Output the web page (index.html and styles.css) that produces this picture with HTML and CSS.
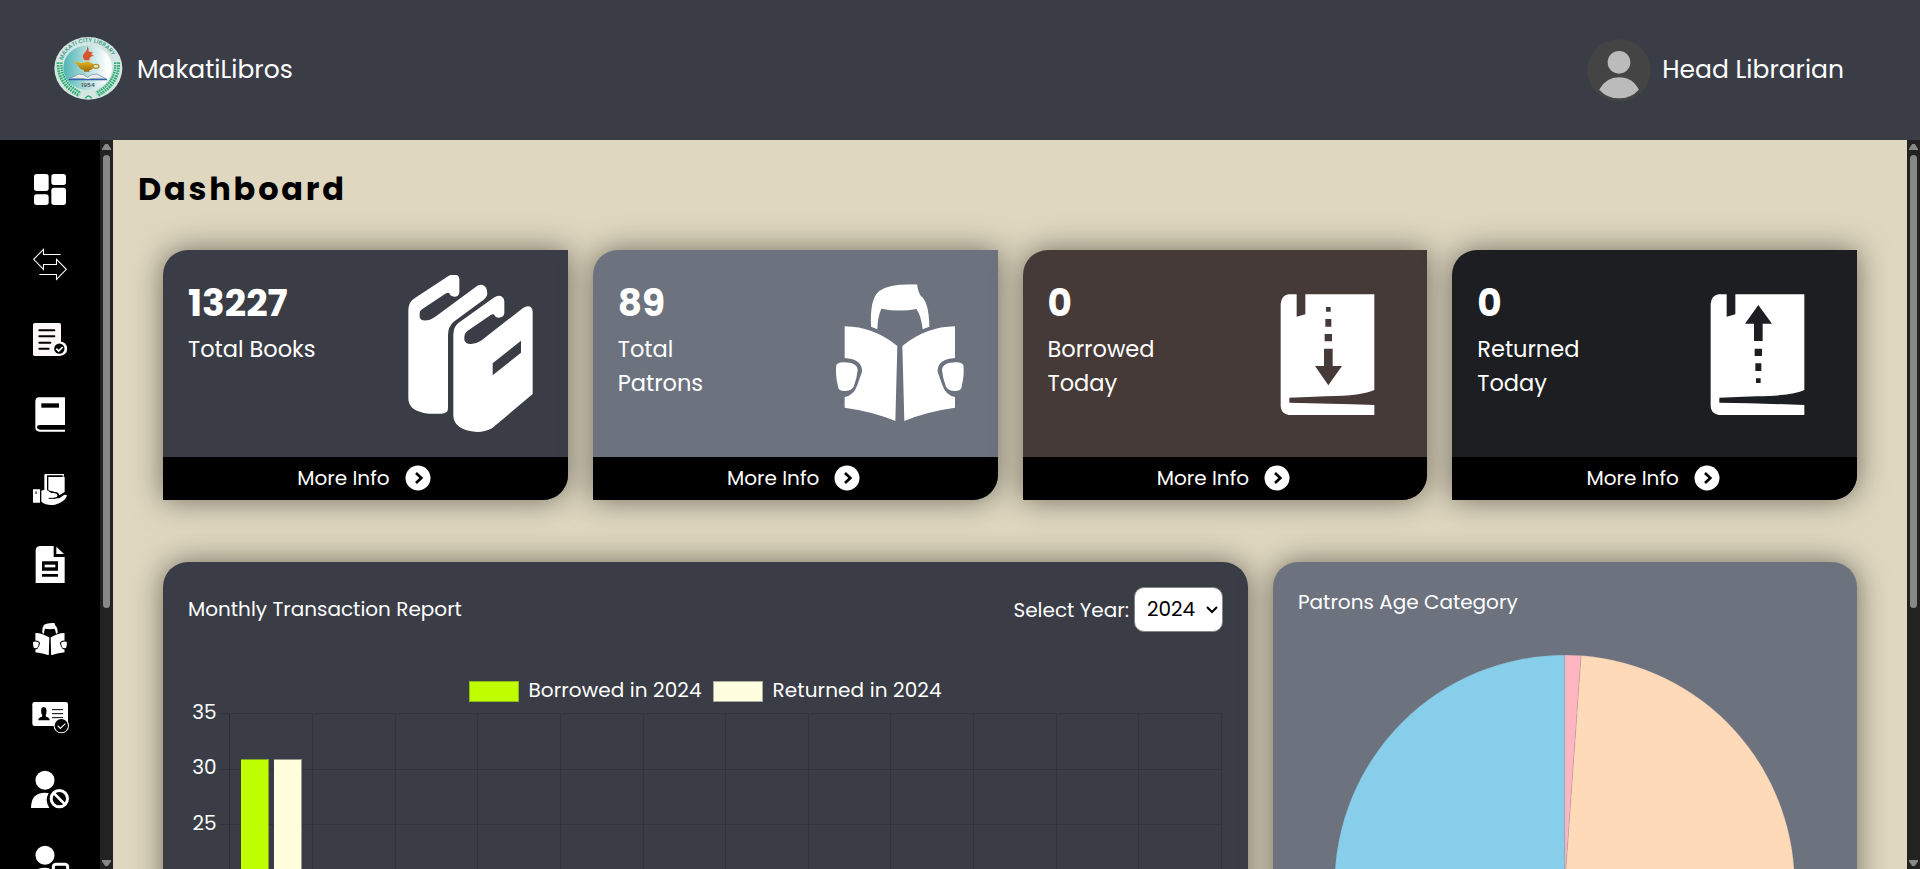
FILE: index.html
```html
<!DOCTYPE html>
<html lang="en">
<head>
<meta charset="utf-8">
<title>MakatiLibros</title>
<link rel="stylesheet" href="styles.css">
</head>
<body>
<svg class="defs" aria-hidden="true">
  <symbol id="reader" viewBox="766 163 386 410" preserveAspectRatio="none">
    <path d="M872 290Q868 205 897 183Q925 163 985 163H1010Q1013 185 1021 197Q1046 215 1047 290L1027 298Q1022 255 1008 237Q957 247 903 236Q892 260 891 298Z"/>
    <g id="reader-half">
      <path d="M793 289Q880 290 951 348L945 573Q880 545 793 533V501Q820 497 831 465L845 425Q847 388 793 384Z"/>
      <path d="M768 405Q775 396 790 397Q830 397 832 420Q830 445 820 470Q812 483 793 483Q775 483 773 470Q764 430 768 405Z"/>
    </g>
    <use href="#reader-half" transform="translate(1917 0) scale(-1 1)"/>
  </symbol>
  <symbol id="more" viewBox="762 702 84 84">
    <circle cx="804" cy="744" r="37.500" fill="#fff"/>
    <path d="M798 729L814 744L798 759" fill="none" stroke="#000" stroke-width="8"/>
  </symbol>
</svg>

<header class="topbar">
  <div class="brand">
    <svg class="logo" viewBox="162 108 207 195">
      <defs>
        <linearGradient id="sky"><stop offset="0" stop-color="#4fb5b4"/><stop offset=".5" stop-color="#b5dede"/><stop offset=".9" stop-color="#fff"/></linearGradient>
        <linearGradient id="gold" x2="0" y2="1"><stop offset="0" stop-color="#e8b81c"/><stop offset="1" stop-color="#9a6a10"/></linearGradient>
        <path id="arc" d="M187 184A80 74 0 0 1 343 184"/>
      </defs>
      <ellipse cx="265" cy="205" rx="102" ry="94" fill="#d3e6e2"/>
      <ellipse cx="263" cy="203" rx="73" ry="67" fill="url(#sky)"/>
      <path d="M179 187Q176 250 240 283M351 187Q354 250 290 283" fill="none" stroke="#2fae74" stroke-width="18" stroke-dasharray="5 2.500"/>
      <path d="M179 187Q176 250 240 283M351 187Q354 250 290 283" fill="none" stroke="#d3e6e2" stroke-width="2"/>
      <path d="M256 295Q265 281 275 295" fill="none" stroke="#2fae74" stroke-width="5"/>
      <path d="M254 181Q242 168 256 156Q262 150 262 138Q268 147 265 154L280 158L273 162L282 168Q268 168 268 181Z" fill="#d8552c"/>
      <path d="M218 183L236 187Q245 192 262 184Q278 190 282 196Q280 209 268 211V215H252V211Q240 208 234 197Q228 186 218 183Z" fill="url(#gold)"/>
      <ellipse cx="288" cy="199" rx="9" ry="6" fill="none" stroke="#c08a1a" stroke-width="3.500"/>
      <path d="M207 237L236 222Q254 222 263 232Q272 222 290 222L320 237Q280 232 263 239Q246 232 207 237Z" fill="#e9eef0" stroke="#68808c" stroke-width="2"/>
      <path d="M206 239H321" stroke="#355db4" stroke-width="3.500"/>
      <text class="logo-year" x="264" y="262" text-anchor="middle">1954</text>
      <text class="logo-ring"><textPath href="#arc" startOffset="3" textLength="188">MAKATI CITY LIBRARY</textPath></text>
    </svg>
    <span class="topbar-text">MakatiLibros</span>
  </div>
  <div class="account">
    <svg class="avatar" viewBox="199.500 116 192 189">
      <ellipse cx="295.500" cy="210" rx="95" ry="93" fill="#444"/>
      <circle cx="295.500" cy="186" r="34" fill="#bbb"/>
      <path d="M236 268Q256 231 295 231Q336 231 355 268Q332 294 295 294Q260 294 236 268Z" fill="#bbb"/>
    </svg>
    <span class="topbar-text">Head Librarian</span>
  </div>
</header>

<div class="shell">
  <nav class="sidebar">
    <svg class="nav-icon" viewBox="75 72 150 153"><rect x="102" y="102" width="44" height="51" rx="8"/><rect x="154" y="102" width="44" height="33" rx="8"/><rect x="102" y="163" width="44" height="32" rx="8"/><rect x="154" y="143" width="44" height="52" rx="8"/></svg>
    <svg class="nav-icon" viewBox="75 297 150 153"><path d="M182 343.500H130.500V328L101 358L130.500 388V373.500H169.500V358L199 388L169.500 418V403.500H118" fill="none" stroke="#fff" stroke-width="3.200"/></svg>
    <svg class="nav-icon" viewBox="75 522 150 153"><rect x="99" y="549" width="84" height="99" rx="5" fill="#fff8f8"/><path d="M118 571H163M118 589H163M118 608H151M118 626H146" stroke="#000" stroke-width="6" stroke-linecap="round"/><circle cx="180" cy="626" r="21.500"/><circle cx="178" cy="626" r="15.500" fill="#000"/><path d="M169 626L176 633L188 621" fill="none" stroke="#fff" stroke-width="5"/></svg>
    <svg class="nav-icon" viewBox="75 747 150 153"><path d="M195 772H117Q106 772 106 785V862Q106 875 119 875H195V869H120Q111 868 111 862Q111 855 120 855H195Z"/><path d="M124 790H177V803H124Z" fill="#000"/></svg>
    <svg class="nav-icon" viewBox="75 972 150 153"><path d="M99 1048H120V1088H99ZM134 1002H192V1006H134ZM133 1004H141V1052H133ZM188 1005H191V1012H188ZM145 1011H194V1056L178 1066Q176 1056 165 1056L145 1051Z"/><path d="M124 1052Q140 1046 148 1055L154 1059H167Q174 1061 173 1068Q170 1074 150 1075H178L192 1065Q199 1062 201 1067Q194 1086 165 1094Q140 1098 124 1085Z"/><path d="M146 1075H166Q175 1073 174 1066Q172 1058 163 1058L153 1057" fill="none" stroke="#000" stroke-width="3"/><path d="M108 1054V1062" stroke="#000" stroke-width="3"/></svg>
    <svg class="nav-icon" viewBox="75 117 150 153"><path d="M119 138H161V171H194V249H107V151Q108 139 119 138ZM169 140L192 162H169Z"/><path d="M126 184H174V212H126ZM126 222H174V230H126Z" fill="#000"/><path d="M134 194H166V202H134Z"/></svg>
    <svg class="nav-icon" viewBox="75 342 150 153"><use href="#reader" x="99" y="369" width="102" height="97"/></svg>
    <svg class="nav-icon" viewBox="75 567 150 153"><rect x="97" y="606" width="107" height="72" rx="7"/><path d="M115 661Q114 653 126 650Q128 646 124 640Q121 621 131 621Q142 621 139 640Q136 646 138 650Q150 653 149 661Z" fill="#000"/><path d="M156 629H189M156 641H189M156 653H189" stroke="#000" stroke-width="3"/><circle cx="184" cy="677" r="23"/><circle cx="184" cy="677" r="20" fill="#000"/><path d="M173 677L181 685L196 671" fill="none" stroke="#fff" stroke-width="3.500"/></svg>
    <svg class="nav-icon" viewBox="75 792 150 153"><circle cx="135" cy="841" r="28.500"/><path d="M93 924Q93 878 135 878Q141 878 146 880Q140 890 140 901Q141 914 148 924Z"/><circle cx="178" cy="896" r="24.500" fill="none" stroke="#fff" stroke-width="9"/><path d="M161 879L195 913" stroke="#fff" stroke-width="8"/></svg>
    <svg class="nav-icon" viewBox="75 1017 150 153"><circle cx="135" cy="1066" r="28.500"/><path d="M93 1149Q93 1103 135 1103Q143 1103 148 1105V1149Z"/><path d="M160 1120V1100Q161 1093 168 1093H194Q202 1093 203 1100V1120" fill="none" stroke="#fff" stroke-width="9"/></svg>
  </nav>
  <div class="scrollbar"><i class="arrow-up"></i><i class="thumb"></i><i class="arrow-down"></i></div>

  <main class="content">
    <h1 class="page-title">Dashboard</h1>
    <section class="cards">
      <article class="card card-slate">
        <div class="card-body">
          <div><div class="count">13227</div><div class="label">Total Books</div></div>
          <svg class="card-icon" viewBox="725 135 471 471"><path d="M774 240Q774 215 795 203L893 139Q905 131 920 135Q927 138 927 150V188Q925 200 912 200Q900 200 897 190Q895 186 885 191L815 238Q808 243 808 250V262Q812 274 830 271Q842 270 858 258L980 168Q995 160 1005 170Q1011 176 1011 190Q1010 202 1000 209L910 275Q893 290 893 315V535Q893 551 872 551H835Q774 545 774 505Z"/><path fill-rule="evenodd" d="M909 315Q909 290 925 278L1030 203Q1045 194 1055 200Q1062 205 1062 215V250Q1060 263 1045 263Q1034 262 1032 254Q1028 250 1020 256L950 304Q942 312 942 320V330Q946 343 962 342Q978 341 992 332L1118 234Q1133 225 1142 232Q1147 237 1147 245V492L1025 595Q1005 606 980 606Q909 600 909 555ZM1027 400L1112 332V368L1027 436Z"/></svg>
        </div>
        <a class="card-more">More Info<svg class="more-icon"><use href="#more"/></svg></a>
      </article>
      <article class="card card-steel">
        <div class="card-body">
          <div><div class="count">89</div><div class="label">Total<br>Patrons</div></div>
          <svg class="card-icon" viewBox="725 135 471 471"><use href="#reader" x="766" y="163" width="386" height="410"/></svg>
        </div>
        <a class="card-more">More Info<svg class="more-icon"><use href="#more"/></svg></a>
      </article>
      <article class="card card-brown">
        <div class="card-body">
          <div><div class="count">0</div><div class="label">Borrowed<br>Today</div></div>
          <svg class="card-icon" viewBox="725 135 471 471"><path fill-rule="evenodd" d="M838 193H862V260L888 253V193H1095V480Q1060 497 950 499L840 503V518Q960 520 1095 525V555H838Q814 550 814 528V222Q816 196 838 193ZM950 231H964V245H950ZM948 267H966V290H948ZM946 312H968V334H946ZM944 356H970V408H998L957 466L917 408H944Z"/></svg>
        </div>
        <a class="card-more">More Info<svg class="more-icon"><use href="#more"/></svg></a>
      </article>
      <article class="card card-ink">
        <div class="card-body">
          <div><div class="count">0</div><div class="label">Returned<br>Today</div></div>
          <svg class="card-icon" viewBox="725 135 471 471"><path fill-rule="evenodd" d="M838 193H862V260L888 253V193H1095V480Q1060 497 950 499L840 503V518Q960 520 1095 525V555H838Q814 550 814 528V222Q816 196 838 193ZM957 225L998 281H970V333H944V281H917ZM946 356H968V378H946ZM948 400H966V423H948ZM950 445H964V459H950Z"/></svg>
        </div>
        <a class="card-more">More Info<svg class="more-icon"><use href="#more"/></svg></a>
      </article>
    </section>

    <section class="panels">
      <article class="panel panel-chart">
        <div class="panel-head">
          <span>Monthly Transaction Report</span>
          <label class="year">Select Year:
            <span class="year-field">
              <select class="year-select"><option>2024</option></select>
              <svg class="year-caret" viewBox="0 0 12 8"><path d="M1 1L6 6L11 1" fill="none" stroke="#000" stroke-width="2"/></svg>
            </span>
          </label>
        </div>
        <svg class="bar-chart" viewBox="188 632 1035 520">
          <g stroke="#000" stroke-opacity=".13">
            <path d="M220 713.500H1222M220 769.500H1222M220 824.500H1222M220 880.500H1222"/>
            <path d="M312.500 714V1150M395.500 714V1150M477.500 714V1150M560.500 714V1150M643.500 714V1150M725.500 714V1150M808.500 714V1150M890.500 714V1150M973.500 714V1150M1056.500 714V1150M1138.500 714V1150M1221.500 714V1150"/>
            <path d="M229.500 714V1150" stroke-opacity=".25"/>
          </g>
          <rect x="241" y="759" width="28" height="391" fill="#7fa61c"/>
          <rect x="241" y="760" width="27" height="390" fill="#bfff00"/>
          <rect x="274" y="759" width="28" height="391" fill="#97988c"/>
          <rect x="274" y="760" width="27" height="390" fill="#ffffe0"/>
          <rect x="469.500" y="681.500" width="49" height="20" fill="#bfff00" stroke="#8fba1a"/>
          <rect x="713.500" y="681.500" width="49" height="20" fill="#ffffe0" stroke="#aaab9c"/>
          <g class="chart-text">
            <text x="528.500" y="697" textLength="173">Borrowed in 2024</text>
            <text x="772.500" y="697" textLength="169">Returned in 2024</text>
            <g text-anchor="end"><text x="216.500" y="719">35</text><text x="216.500" y="774">30</text><text x="216.500" y="830">25</text></g>
          </g>
        </svg>
      </article>
      <article class="panel panel-pie">
        <div>Patrons Age Category</div>
        <svg class="pie-chart" viewBox="1298 617 534 520">
          <g stroke="#808080" stroke-opacity=".2">
            <path fill="#ffdab9" d="M1564.700 885.300L1581 655.600A230.300 230.300 0 0 1 1564.700 1115.600Z"/>
            <path fill="#ffb6c1" d="M1564.700 885.300V655A230.300 230.300 0 0 1 1581 655.600Z"/>
            <path fill="#87ceeb" d="M1564.700 885.300V1115.600A230.300 230.300 0 0 1 1564.700 655Z"/>
          </g>
        </svg>
      </article>
    </section>
  </main>
  <div class="scrollbar"><i class="arrow-up"></i><i class="thumb"></i><i class="arrow-down"></i></div>
</div>
</body>
</html>
```
FILE: styles.css
```css
* { box-sizing: border-box; }
body {
  margin: 0;
  height: 869px;
  overflow: hidden;
  display: flex;
  flex-direction: column;
  background: #dfd7bf;
  color: #fff;
  font: 20px/1.5 Poppins, Inter, sans-serif;
}
svg { display: block; fill: #fff; }
.defs { position: absolute; width: 0; height: 0; }

.topbar {
  flex: 0 0 140px;
  display: flex;
  justify-content: space-between;
  align-items: center;
  padding: 0 76px 0 54px;
  background: #3a3d46;
  font-size: 25px;
}
.brand, .account { display: flex; align-items: center; }
.logo { width: 69px; height: 65px; margin: -3px 14px 0 0; overflow: visible; }
.logo-year { font: 500 18px Poppins, Inter, sans-serif; fill: #444; }
.logo-ring { font: 600 17px Poppins, Inter, sans-serif; fill: #3f9f8c; }
.avatar { width: 64px; height: 63px; margin-right: 11px; }

.shell { flex: 1; min-height: 0; display: flex; }
.sidebar {
  flex: 0 0 100px;
  display: flex;
  flex-direction: column;
  align-items: center;
  gap: 24px;
  padding-top: 24px;
  background: #000;
  overflow: hidden;
}
.nav-icon { flex: none; width: 50px; height: 51px; }

.scrollbar {
  flex: 0 0 13px;
  display: flex;
  flex-direction: column;
  align-items: center;
  background: #222;
  padding: 4px 0 3px;
}
.thumb { width: 7px; height: 453px; margin: 5px 0 auto; border-radius: 4px; background: #888; }
.arrow-up, .arrow-down { width: 9px; height: 6px; background: #888; }
.arrow-up { clip-path: polygon(35% 0, 65% 0, 100% 80%, 100% 100%, 0 100%, 0 80%); }
.arrow-down { clip-path: polygon(0 0, 100% 0, 100% 20%, 65% 100%, 35% 100%, 0 20%); }

.content { flex: 1; min-width: 0; overflow: hidden; padding: 25px 50px 0; }
.page-title {
  margin: 0 0 0 -25px;
  color: #000;
  font-size: 32px;
  line-height: 48px;
  letter-spacing: 2.800px;
}
.cards { display: grid; grid-template-columns: repeat(4, 1fr); gap: 25px; margin-top: 37px; }
.card {
  height: 250px;
  display: flex;
  flex-direction: column;
  border-radius: 25px 0;
  overflow: hidden;
  box-shadow: 0 0 30px rgba(0, 0, 0, .5);
}
.card-slate { background: #3a3d46; }
.card-steel { background: #6c737f; }
.card-brown { background: #463a38; }
.card-ink { background: #1c1e22; }
.card-body { flex: 1; display: flex; justify-content: space-between; padding: 25px 19px 0 25px; }
.count { font-size: 37.500px; font-weight: 700; line-height: 1.5; }
.label { font-size: 22.500px; line-height: 34px; padding-top: 1px; }
.card-icon { width: 157px; height: 157px; }
.card-more {
  flex: 0 0 43px;
  display: flex;
  align-items: center;
  justify-content: center;
  gap: 14px;
  padding: 0 2px 2px 0;
  background: #000;
}
.more-icon { width: 28px; height: 28px; }

.panels { display: grid; grid-template-columns: 1085px 1fr; gap: 25px; margin-top: 62px; }
.panel { height: 600px; padding: 25px; border-radius: 25px; box-shadow: 0 0 30px rgba(0, 0, 0, .5); }
.panel-chart { background: #3a3d46; }
.panel-pie { background: #6c737f; }
.panel-head { display: flex; justify-content: space-between; align-items: center; height: 45px; line-height: 28px; }
.panel-head > span { padding-bottom: 2px; }
.year { display: flex; align-items: center; gap: 5px; }
.year-field { display: grid; }
.year-select {
  grid-area: 1 / 1;
  appearance: none;
  width: 89px;
  height: 45px;
  padding: 0 12px 1px;
  border: 1px solid #858585;
  border-radius: 10px;
  background: #fff;
  color: #000;
  font: inherit;
}
.year-caret { grid-area: 1 / 1; align-self: center; justify-self: end; width: 12px; height: 8px; margin-right: 5px; }
.bar-chart { width: 1035px; height: 520px; }
.chart-text { font: 20px Poppins, Inter, sans-serif; fill: #fff; }
.pie-chart { width: 534px; height: 520px; }
```
